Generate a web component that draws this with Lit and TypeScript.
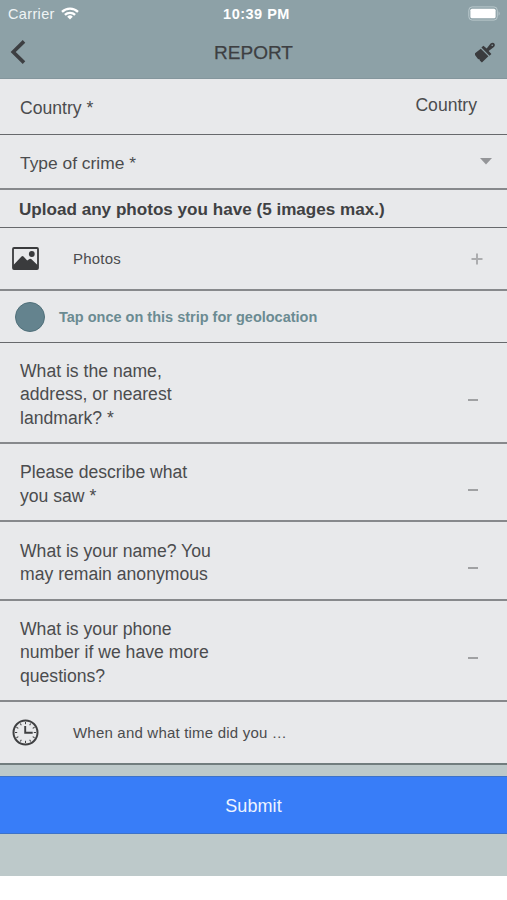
import { LitElement, html, css, svg } from "lit";
import { customElement } from "lit/decorators.js";

@customElement("app-root")
export class AppRoot extends LitElement {
  static styles = css`
    :host { display: block; height: 900px; background: #fff; overflow: hidden;
      font-family: "Liberation Sans", Arial, sans-serif; color: #4b4c4e; }
    * { box-sizing: border-box; }
    svg { display: block; }
    .screen { height: 876px; background: #bdc9ca; display: flex; flex-direction: column; }
    header { height: 79px; background: #8da1a7; border-bottom: 1px solid #84969d; }
    .status { height: 27px; display: grid; grid-template-columns: 1fr auto 1fr; align-items: center;
      padding: 0 6px 0 8px; color: #fff; font-size: 14.5px; }
    .carrier { display: flex; align-items: center; gap: 6px; color: #eff4f5; letter-spacing: .35px; }
    .time { font-weight: 700; font-size: 14.5px; letter-spacing: .5px; padding-left: 4px; }
    .battery { justify-self: end; }
    .bar { height: 50px; display: grid; grid-template-columns: 1fr auto 1fr; align-items: center;
      padding: 0 12px 0 10px; color: #3d3f42; }
    .title { font-size: 19px; padding: 2px 0 0 2px; -webkit-text-stroke: .25px #3d3f42; }
    .brush { justify-self: end; }
    .row { background: #e8e9eb; border-bottom: 1px solid #67696c; display: flex; align-items: center;
      padding: 0 30px 0 20px; font-size: 17.6px; line-height: 23.2px;
      justify-content: space-between; flex: none; }
    .row.soft { border-bottom: 2px solid #87898c; }
    .country { height: 56px; padding-top: 5px; }
    .value { margin-top: -6px; }
    .type { height: 55px; padding-right: 15px; font-size: 17.4px; }
    .type span { padding-top: 5px; }
    .upload { height: 38px; padding-left: 19px; padding-top: 2px; font-weight: 700; color: #404143;
      font-size: 17.1px; }
    .photos { height: 63px; }
    .geo { height: 52px; padding-left: 15px; justify-content: flex-start; gap: 14px;
      color: #6b8b92; font-weight: 700; font-size: 14.5px; }
    .geo span:last-child { padding-top: 2px; }
    .dot { width: 30px; height: 30px; border-radius: 50%; background: #64838e; border: 1px solid #50707a; }
    .icon { padding-left: 12px; padding-right: 24px; font-size: 15px; letter-spacing: .2px; }
    .lead { display: flex; align-items: center; gap: 34px; }
    .q { padding-right: 29px; }
    .lines { padding-top: 5px; }
    .tall { height: 101px; }
    .short { height: 78px; }
    .name { height: 79px; }
    .when { height: 63px; border-bottom: 2px solid #717d7e; }
    .dash { width: 10px; height: 2px; background: #a0a1a3; margin-top: 15px; }
    .submit { margin-top: 11px; height: 58px; background: #387df8; border: 0 solid #3d72c8;
      border-width: 1px 0; color: #eef4ff; font: 18px "Liberation Sans", Arial, sans-serif;
      letter-spacing: .1px; padding: 2px 0 0; }
  `;

  private question(lines: string[], size: string) {
    return html`<div class="row q soft ${size}">
      <div class="lines">${lines.map((l) => html`<div>${l}</div>`)}</div>
      <div class="dash"></div>
    </div>`;
  }

  private ticks() {
    return Array.from({ length: 12 }, (_, i) => svg`<path d="M13.5 3v2.2" stroke="#3f4042"
      stroke-width="1" transform="rotate(${i * 30} 13.5 13.5)"/>`);
  }

  render() {
    return html`<div class="screen">
      <header>
        <div class="status">
          <div class="carrier"><span>Carrier</span>
            <svg width="18" height="13" viewBox="0 0 18 13" fill="none" stroke="#fff" stroke-width="2.3">
              <path d="M1 4.9a11.4 11.4 0 0 1 16 0"/><path d="M3.9 7.9a7.3 7.3 0 0 1 10.2 0"/>
              <path d="M9 12.6L6.2 9.7a4 4 0 0 1 5.6 0z" fill="#fff" stroke="none"/>
            </svg></div>
          <div class="time">10:39 PM</div>
          <svg class="battery" width="33" height="15" viewBox="0 0 33 15">
            <rect x=".8" y=".9" width="28.5" height="13.2" rx="3.4" fill="none" stroke="#b9c8cc"/>
            <rect x="2.4" y="2.7" width="25.2" height="9.6" rx="1.6" fill="#fff"/>
            <path d="M30.6 5.2q2.2 2.3 0 4.6z" fill="#b9c8cc"/>
          </svg>
        </div>
        <div class="bar">
          <svg width="16" height="24" viewBox="0 0 16 24"><path d="M14 1.4L3.2 12 14 22.6" fill="none"
            stroke="#3d3f42" stroke-width="3.6"/></svg>
          <div class="title">REPORT</div>
          <svg class="brush" width="21" height="21" viewBox="0 0 21 21" fill="#3a3b3e">
            <path d="M1 11.2L6.8 6.8l7.6 7.4-6.5 6.3L6 18.8l-.8-1.700-1 .1L1 13z"/>
            <path d="M7.400 5.600l2-1.900 3.300 2.900L16.600 1.500q2.500-1.700 3.900.2 1 1.900-.9 3.500L14.700 9l2.700 2.900-1.900 1.900z"/>
            <circle cx="18.200" cy="3.200" r=".8" fill="#8da1a7"/>
          </svg>
        </div>
      </header>
      <div class="row country"><span>Country *</span><span class="value">Country</span></div>
      <div class="row type soft"><span>Type of crime *</span>
        <svg width="12" height="7" viewBox="0 0 12 7"><path d="M0 0h12L6 6.500z" fill="#949598"/></svg>
      </div>
      <div class="row upload">Upload any photos you have (5 images max.)</div>
      <div class="row icon photos soft">
        <div class="lead">
          <svg width="27" height="23" viewBox="0 0 27 23" fill="#3a3b3d">
            <rect x="1" y="1" width="25" height="21" rx="1" fill="none" stroke="#3a3b3d" stroke-width="1.800"/>
            <path d="M1 18.500L9.500 9.500q1-1 2 0l3.700 4 2.300-1.500q1-.6 2 .2L26 18.500V22H1z"/><circle cx="19.800" cy="7" r="2.900"/>
          </svg><span>Photos</span>
        </div>
        <svg width="12" height="12" viewBox="0 0 12 12"><path d="M6 .5v11M.5 6h11" stroke="#acadaf" stroke-width="2"/></svg>
      </div>
      <div class="row geo"><span class="dot"></span><span>Tap once on this strip for geolocation</span></div>
      ${this.question(["What is the name,", "address, or nearest", "landmark? *"], "tall")}
      ${this.question(["Please describe what", "you saw *"], "short")}
      ${this.question(["What is your name? You", "may remain anonymous"], "name")}
      ${this.question(["What is your phone", "number if we have more", "questions?"], "tall")}
      <div class="row icon when">
        <div class="lead">
          <svg width="27" height="27" viewBox="0 0 27 27" fill="none" stroke="#3f4042">
            <circle cx="13.500" cy="13.500" r="12" stroke-width="2"/>${this.ticks()}
            <path d="M13.200 7v6.800h7.500" stroke-width="1.900"/>
          </svg><span>When and what time did you …</span>
        </div>
      </div>
      <button class="submit">Submit</button>
    </div>`;
  }
}
